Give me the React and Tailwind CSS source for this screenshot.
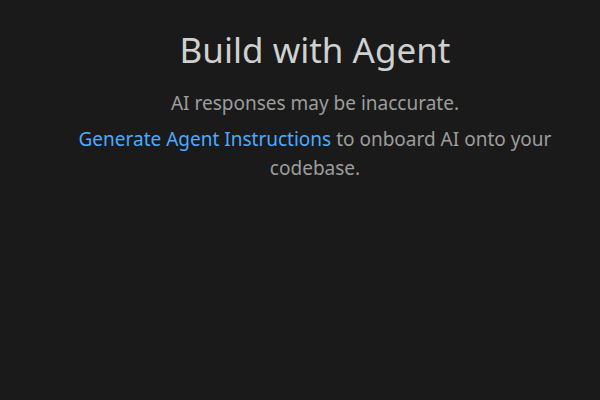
import React from 'react';

const App = () => {
  return (
    <div
      className="w-[600px] h-[400px] bg-[#1a1a1a] pl-[30px] flex flex-col items-center overflow-hidden"
      style={{ fontFamily: '"Noto Sans", "Open Sans", sans-serif' }}
    >
      <h1 className="mt-[28px] text-[35px] leading-[44px] text-[#d0d0d0] font-normal">Build with Agent</h1>
      <p className="mt-[17px] text-[19px] leading-[28px] text-[#9d9d9d]">AI responses may be inaccurate.</p>
      <p className="mt-[8px] w-[490px] text-center text-[19px] leading-[29px] text-[#9d9d9d]">
        <span className="text-[#4daafc]">Generate Agent Instructions</span> to onboard AI onto your codebase.
      </p>
    </div>
  );
};

export default App;
